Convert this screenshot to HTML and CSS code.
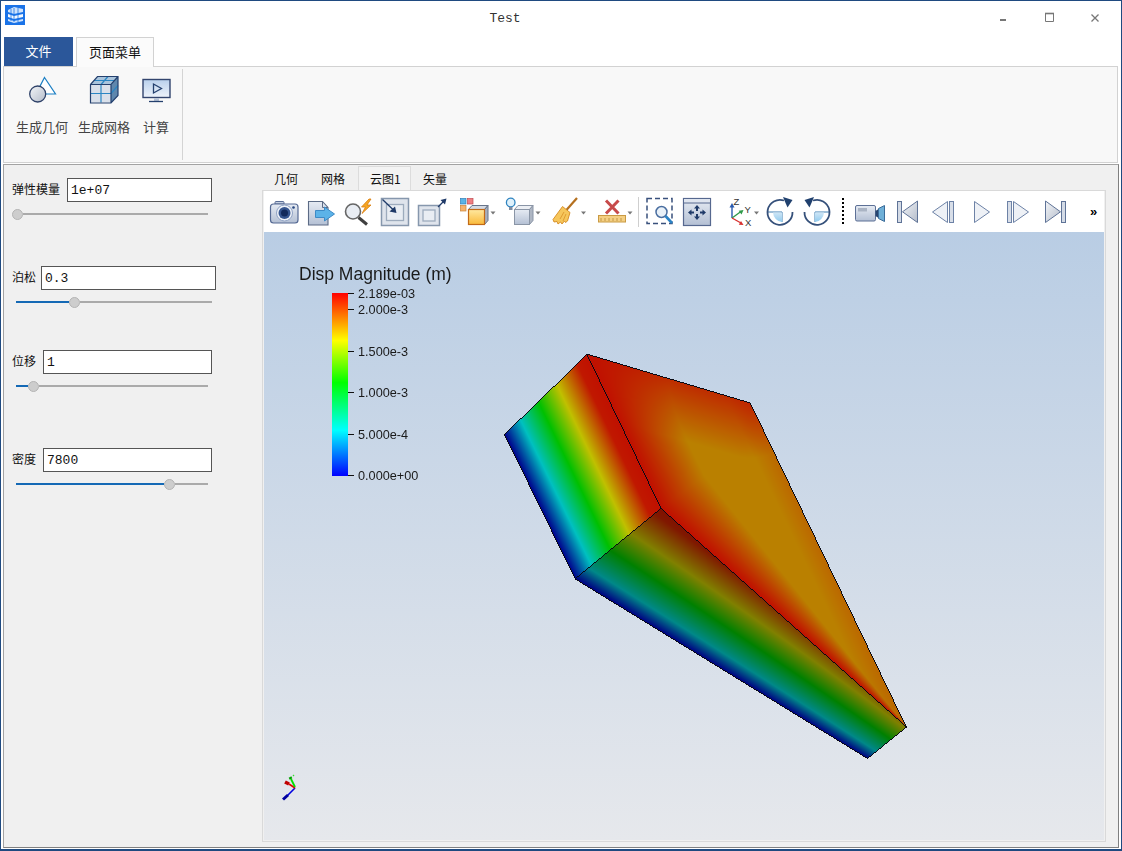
FILE: index.html
```html
<!DOCTYPE html>
<html lang="zh">
<head>
<meta charset="utf-8">
<title>Test</title>
<link rel="stylesheet" href="styles.css">
</head>
<body>
<svg class="defs" width="0" height="0" aria-hidden="true">
  <defs>
    <linearGradient id="metal" x1="0" y1="0" x2="0" y2="1"><stop offset="0" stop-color="#e6ebf3"/><stop offset="1" stop-color="#b4c0d4"/></linearGradient>
    <linearGradient id="grey" x1="0" y1="0" x2="1" y2="1"><stop offset="0" stop-color="#f3f5f8"/><stop offset="1" stop-color="#b4bcca"/></linearGradient>
    <linearGradient id="gold" x1="0" y1="0" x2="0" y2="1"><stop offset="0" stop-color="#ffe9a0"/><stop offset="1" stop-color="#f9b93a"/></linearGradient>
    <linearGradient id="sky" x1="0" y1="0" x2="0" y2="1"><stop offset="0" stop-color="#cfe6f6"/><stop offset="1" stop-color="#8fcaee"/></linearGradient>
    <linearGradient id="screen" x1="0" y1="0" x2="0" y2="1"><stop offset="0" stop-color="#b9d0ec"/><stop offset="1" stop-color="#eef3fa"/></linearGradient>
    <linearGradient id="bar" x1="0" y1="0" x2="0" y2="1">
      <stop offset="0" stop-color="#ff0000"/><stop offset="0.26" stop-color="#ffff00"/><stop offset="0.49" stop-color="#00ff00"/><stop offset="0.75" stop-color="#00ffff"/><stop offset="1" stop-color="#0000ff"/>
    </linearGradient>
  </defs>
</svg>

<div class="window">
  <header class="titlebar">
    <svg class="appicon" width="29" height="36" viewBox="1 1 29 36">
      <rect x="5" y="5" width="20" height="20" fill="#1a73e8"/>
      <path d="M8 10l6-3 9 2v3l-9 2-6-2z" fill="#cfe3fb"/>
      <path d="M8 14l6 2 9-2v3l-9 2-6-2z" fill="#f2f8ff"/>
      <path d="M8 19l6 2 9-2v2l-9 2-6-2z" fill="#cfe3fb"/>
      <path d="M11 9v12M14 8v14M18 8v14" stroke="#1a73e8" stroke-width=".8"/>
    </svg>
    <div class="title">Test</div>
    <div class="winbtns">
      <svg width="46" height="36" viewBox="980 1 46 36"><rect x="1000" y="19" width="6" height="2" fill="#777"/></svg>
      <svg width="46" height="36" viewBox="1026 1 46 36"><path d="M1045.5 13.5h8v8h-8z" fill="none" stroke="#777"/><path d="M1045 13.5h9" stroke="#777" stroke-width="1.6"/></svg>
      <svg width="46" height="36" viewBox="1072 1 46 36"><path d="M1091.5 14.5l7 7M1098.5 14.5l-7 7" stroke="#777" stroke-width="1.3" fill="none"/></svg>
    </div>
  </header>

  <nav class="menutabs">
    <div class="menutab menutab-file">文件</div>
    <div class="menutab menutab-page">页面菜单</div>
  </nav>

  <section class="ribbon">
    <div class="ribbon-group">
      <div class="rbtn rbtn-a">
        <svg width="36" height="36" viewBox="24 72 36 36">
          <path d="M44.500 77.500L55.500 94H36z" fill="#fff" stroke="#1b7fc4" stroke-width="1.200"/>
          <circle cx="37.700" cy="94" r="8" fill="url(#grey)" stroke="#2e4168" stroke-width="1.300"/>
        </svg>
        <span>生成几何</span>
      </div>
      <div class="rbtn rbtn-b">
        <svg width="36" height="36" viewBox="86 72 36 36">
          <rect x="90.500" y="84.500" width="20.500" height="18" fill="#d9e0ea"/>
          <path d="M97.500 76.500h20.500l-7 8h-20.500z" fill="#a9c4dc"/>
          <path d="M111 84.500l7-8v19l-7 7.500z" fill="#5f87ad"/>
          <path d="M90.500 93.500h20.500l7-8M101 84.500v18M101 84.500l7-8M94 80.500h20.500" fill="none" stroke="#2a86c4" stroke-width="1.200"/>
          <path d="M90.500 84.500l7-8h20.500v19l-7 7.500h-20.500zM90.500 84.500h20.500l7-8M111 84.500v18" fill="none" stroke="#24406e" stroke-width="1.200"/>
        </svg>
        <span>生成网格</span>
      </div>
      <div class="rbtn rbtn-c">
        <svg width="36" height="36" viewBox="138 72 36 36">
          <rect x="143" y="79.500" width="27" height="18" fill="url(#screen)" stroke="#33456e" stroke-width="1.400"/>
          <path d="M153.500 84v9l8-4.500z" fill="none" stroke="#24406e" stroke-width="1.300"/>
          <path d="M154 98h5v3h-5z" fill="#b8c4d6"/>
          <path d="M149 101.500h14" stroke="#24406e" stroke-width="1.300"/>
        </svg>
        <span>计算</span>
      </div>
    </div>
  </section>

  <main class="main">
    <aside class="params">
      <div class="field">
        <div class="row"><label class="lbl">弹性模量</label><input class="inp inp-e" value="1e+07" readonly></div>
        <div class="slider slider-first"><i class="thumb"></i><i class="rest"></i></div>
      </div>
      <div class="field field-2">
        <div class="row row-tight"><label class="lbl">泊松</label><input class="inp inp-n" value="0.3" readonly></div>
        <div class="slider slider-wide"><i class="fill" style="width:53px"></i><i class="thumb"></i><i class="rest"></i></div>
      </div>
      <div class="field field-3">
        <div class="row"><label class="lbl">位移</label><input class="inp inp-s" value="1" readonly></div>
        <div class="slider"><i class="fill" style="width:12px"></i><i class="thumb"></i><i class="rest"></i></div>
      </div>
      <div class="field field-4">
        <div class="row"><label class="lbl">密度</label><input class="inp inp-s" value="7800" readonly></div>
        <div class="slider"><i class="fill" style="width:148px"></i><i class="thumb"></i><i class="rest"></i></div>
      </div>
    </aside>

    <section class="work">
      <div class="viewtabs">
        <div class="vtab">几何</div>
        <div class="vtab">网格</div>
        <div class="vtab vtab-on">云图1</div>
        <div class="vtab">矢量</div>
      </div>
      <div class="pane">
        <div class="toolbar">
          <svg width="37" height="41" viewBox="266 191 37 41">
            <path d="M275 204v-1.500q0-1 1-1h7q1 0 1 1v1.500z" fill="#c5d0e2" stroke="#5a6d95"/>
            <rect x="270.500" y="204" width="27.500" height="19" rx="3" fill="url(#metal)" stroke="#566a94" stroke-width="1.200"/>
            <circle cx="284.500" cy="213" r="8" fill="#eef2f8" stroke="#8fa2c4"/>
            <circle cx="284.500" cy="213" r="6" fill="#35558f"/>
            <circle cx="284.500" cy="213" r="3.500" fill="#122a5c"/>
            <circle cx="293.500" cy="207.500" r="1.300" fill="#24457f"/>
          </svg>
          <svg width="37" height="41" viewBox="303 191 37 41">
            <path d="M308.500 201.500h14l5.500 6v17.500h-19.500z" fill="url(#metal)" stroke="#5c6b85" stroke-width="1.100"/>
            <path d="M322.500 201.500v6h5.500" fill="none" stroke="#5c6b85"/>
            <path d="M315.500 210.500h9v-3.500l10 7-10 7v-3.500h-9z" fill="#5cb3e8" stroke="#3d8ac6"/>
          </svg>
          <svg width="37" height="41" viewBox="340 191 37 41">
            <circle cx="353" cy="211.500" r="7.500" fill="#e9edf3" stroke="#666" stroke-width="1.600"/>
            <path d="M358.500 217.500l8.500 7" stroke="#3f3f3f" stroke-width="3"/>
            <path d="M369 199l-7.500 8h4l-3.500 6.500 9-8.500h-4l4-6z" fill="#f5a623" stroke="#d97d10" stroke-width=".8"/>
          </svg>
          <svg width="37" height="41" viewBox="377 191 37 41">
            <rect x="381.500" y="198.500" width="27" height="27" fill="#dfe4ec" stroke="#8697ad" stroke-width="1.500"/>
            <rect x="386.500" y="204.500" width="17" height="16" fill="#e9edf3" stroke="#9dabbd" stroke-width="1.300"/>
            <path d="M382.500 199.500l11.500 11" stroke="#1f3a68" stroke-width="1.300"/>
            <path d="M396.500 213l-7-1.500 5.500-5z" fill="#1f3a68"/>
          </svg>
          <svg width="37" height="41" viewBox="414 191 37 41">
            <rect x="418.500" y="205.500" width="21" height="20" fill="#dfe4ec" stroke="#8697ad" stroke-width="1.500"/>
            <rect x="423" y="210" width="12" height="11" fill="#e9edf3" stroke="#9dabbd" stroke-width="1.300"/>
            <path d="M438 207l6-6" stroke="#1f3a68" stroke-width="1.300"/>
            <path d="M446.500 198.500l-1.500 6-4.500-4.500z" fill="#1f3a68"/>
          </svg>
          <svg width="52" height="41" viewBox="451 191 52 41">
            <rect x="460.500" y="198.500" width="5.500" height="5.500" fill="#5ab4e6" stroke="#2f7fb8" stroke-width=".7"/>
            <rect x="467.500" y="198.500" width="5.500" height="5.500" fill="#ee7f83" stroke="#c24b50" stroke-width=".7"/>
            <rect x="460.500" y="205.500" width="5.500" height="5.500" fill="#f6b26b" stroke="#c9843a" stroke-width=".7"/>
            <path d="M468.500 209.500l3.500-4h16l-3.500 4z" fill="#d5dae3" stroke="#67748a"/>
            <path d="M484.500 209.500l3.500-4v15l-3.500 4z" fill="#a7afbd" stroke="#67748a"/>
            <rect x="468.500" y="209.500" width="16" height="15" fill="url(#gold)" stroke="#c26a17" stroke-width="1.200"/>
            <path d="M490.500 211.500h5l-2.500 3z" fill="#777"/>
          </svg>
          <svg width="45" height="41" viewBox="503 191 45 41">
            <circle cx="510.700" cy="202.500" r="4.300" fill="#dff1fb" stroke="#2f84c0" stroke-width="1.300"/>
            <path d="M509 207h3.500v3h-3.500z" fill="#7f8ca0"/>
            <path d="M514.500 209.500l3.500-4h15l-3.500 4z" fill="#eceff4" stroke="#8a95a6"/>
            <path d="M529.500 209.500l3.500-4v15l-3.500 4z" fill="#aeb6c3" stroke="#8a95a6"/>
            <rect x="514.500" y="209.500" width="15" height="15" fill="url(#metal)" stroke="#8a95a6"/>
            <path d="M535.500 211.500h5l-2.500 3z" fill="#777"/>
          </svg>
          <svg width="46" height="41" viewBox="548 191 46 41">
            <path d="M577 198l-11 12.500" stroke="#b5701f" stroke-width="2.200"/>
            <path d="M562.500 206.500l7.500 6-2.500 8.500-2 1.500-1-1.500-2.500 3-1.500-2-2.500 2-1-2.500-3 .5-1-2.500z" fill="#f6c65b" stroke="#d58a20" stroke-width=".9"/>
            <path d="M564 212l-4 7M566 214l-3 7" stroke="#d58a20" stroke-width=".7"/>
            <path d="M581 211.500h5l-2.500 3z" fill="#777"/>
          </svg>
          <svg width="42" height="41" viewBox="594 191 42 41">
            <rect x="598.500" y="215.500" width="27" height="6.500" fill="#f4cf83" stroke="#c99a43"/>
            <path d="M601 218v3M605 218v3M609 218v3M613 218v3M617 218v3M621 218v3" stroke="#b88a3a" stroke-width=".8"/>
            <path d="M606 200.500l12.500 13M618.500 200.500l-12.500 13" stroke="#c74a4a" stroke-width="3"/>
            <path d="M627.500 211.500h5l-2.500 3z" fill="#777"/>
          </svg>
          <svg width="5" height="41" viewBox="636 191 5 41"><path d="M638.500 197v30" stroke="#cfcfcf"/></svg>
          <svg width="37" height="41" viewBox="641 191 37 41">
            <rect x="647" y="198.500" width="25" height="25" fill="none" stroke="#39507c" stroke-width="1.500" stroke-dasharray="5 3"/>
            <circle cx="661.500" cy="212" r="5.500" fill="#e9f1f8" stroke="#4a6ea0" stroke-width="1.500"/>
            <path d="M665.500 216l6.500 7" stroke="#2b83c6" stroke-width="2.600"/>
          </svg>
          <svg width="37" height="41" viewBox="678 191 37 41">
            <rect x="683.500" y="198.500" width="27" height="27" fill="url(#metal)" stroke="#56688f" stroke-width="1.200"/>
            <rect x="684" y="199" width="26" height="3.500" fill="#dfe5ef"/>
            <path d="M684 203h26" stroke="#56688f"/>
            <path d="M697 205l3 3.500h-2v2.500h-2v-2.500h-2zM697 220l3-3.500h-2v-2.500h-2v2.500h-2zM688 212.500l3.500-3v2h2.500v2h-2.500v2zM706 212.500l-3.500-3v2h-2.500v2h2.500v2z" fill="#1f3a68"/>
          </svg>
          <svg width="47" height="41" viewBox="715 191 47 41">
            <path d="M732 218v-12" stroke="#2a5bb0" stroke-width="1.400"/><path d="M732 203l2.500 4.500h-5z" fill="#2a5bb0"/>
            <path d="M732 218l9-6.500" stroke="#2f9a4a" stroke-width="1.400"/><path d="M743.500 210l-2 4.500-2.800-3.800z" fill="#2f9a4a"/>
            <path d="M732 218l9 5" stroke="#d9312f" stroke-width="1.400"/><path d="M743.500 225l-4.700-.2 2.200-3.800z" fill="#d9312f"/>
            <text class="axt" x="733.500" y="205">Z</text>
            <text class="axt" x="744.500" y="213">Y</text>
            <text class="axt" x="745" y="226">X</text>
            <path d="M754 211.500h5l-2.500 3z" fill="#777"/>
          </svg>
          <svg width="37" height="41" viewBox="762 191 37 41">
            <path d="M767.500 212H782v10" fill="none" stroke="#3f7fb2"/>
            <path d="M782 212.500h-9a10 10 0 0 0 9 9.500z" fill="url(#sky)"/>
            <path d="M784 200.500A12.500 12.500 0 1 0 792.500 212" fill="none" stroke="#35507a" stroke-width="1.800"/>
            <path d="M783 197l9.500 3-5 7.500z" fill="#20406e"/>
          </svg>
          <svg width="37" height="41" viewBox="799 191 37 41">
            <path d="M829.500 212H815v10" fill="none" stroke="#3f7fb2"/>
            <path d="M815 212.500h9a10 10 0 0 1-9 9.500z" fill="url(#sky)"/>
            <path d="M813 200.500A12.500 12.500 0 1 1 804.500 212" fill="none" stroke="#35507a" stroke-width="1.800"/>
            <path d="M814 197l-9.500 3 5 7.500z" fill="#20406e"/>
          </svg>
          <svg width="14" height="41" viewBox="836 191 14 41"><path d="M843 198v28" stroke="#000" stroke-width="2" stroke-dasharray="2 2"/></svg>
          <svg width="39" height="41" viewBox="850 191 39 41">
            <rect x="855.500" y="205.500" width="20" height="15.500" rx="1.500" fill="url(#metal)" stroke="#5d7096"/>
            <rect x="858" y="208" width="9" height="3.500" fill="#aab4c4"/>
            <path d="M875.500 211l3-2v9l-3-2z" fill="#27456f"/>
            <path d="M878.500 208.500l6-3v16l-6-3z" fill="#6fb0d8" stroke="#3b6b99"/>
          </svg>
          <svg width="36" height="41" viewBox="889 191 36 41">
            <rect x="897.500" y="201.500" width="4" height="21" fill="#d4dbe6" stroke="#5f7397"/>
            <path d="M917.500 201v21.500l-15-10.700z" fill="url(#grey)" stroke="#5f7397"/>
          </svg>
          <svg width="37" height="41" viewBox="925 191 37 41">
            <path d="M947.500 201.500v21l-15-10.500z" fill="#eef1f6" stroke="#6d82a6"/>
            <rect x="949.500" y="201.500" width="4" height="21" fill="#d8dee8" stroke="#6d82a6"/>
          </svg>
          <svg width="38" height="41" viewBox="962 191 38 41">
            <path d="M974.500 201.500v21l15-10.500z" fill="#eef1f6" stroke="#6d82a6"/>
          </svg>
          <svg width="37" height="41" viewBox="1000 191 37 41">
            <rect x="1007.500" y="201.500" width="4" height="21" fill="#d8dee8" stroke="#6d82a6"/>
            <path d="M1013.500 201.500v21l15-10.500z" fill="#eef1f6" stroke="#6d82a6"/>
          </svg>
          <svg width="37" height="41" viewBox="1037 191 37 41">
            <path d="M1045.500 201v21.500l15-10.700z" fill="url(#grey)" stroke="#5f7397"/>
            <rect x="1061.500" y="201.500" width="4" height="21" fill="#d4dbe6" stroke="#5f7397"/>
          </svg>
          <span class="more">»</span>
        </div>
        <div class="viewport">
          <canvas id="scene" class="layer" width="840" height="608"></canvas>
          <svg class="layer" width="840" height="608" viewBox="264 232 840 608">
            <text class="lg-title" x="299" y="280">Disp Magnitude (m)</text>
            <rect x="332" y="293" width="16" height="183" fill="url(#bar)"/>
            <path d="M348 293.500h6M348 309.500h6M348 351.500h6M348 392.500h6M348 434.500h6M348 475.500h6" stroke="#111"/>
            <text class="lg" x="358" y="297.500">2.189e-03</text>
            <text class="lg" x="358" y="313.500">2.000e-3</text>
            <text class="lg" x="358" y="355.500">1.500e-3</text>
            <text class="lg" x="358" y="396.500">1.000e-3</text>
            <text class="lg" x="358" y="438.500">5.000e-4</text>
            <text class="lg" x="358" y="479.500">0.000e+00</text>
            <path d="M295 788l-11 11" stroke="#0000e0" stroke-width="1.600"/>
            <path d="M288 795l-5 4.500" stroke="#0000a0" stroke-width="3"/>
            <path d="M295 788l-6-4" stroke="#e00000" stroke-width="1.600"/>
            <path d="M289 784l-4-2" stroke="#c00000" stroke-width="3.500"/>
            <path d="M295 787l-4-8" stroke="#00e000" stroke-width="1.800"/>
            <path d="M291 779l-1-2" stroke="#00a000" stroke-width="3"/>
            <path d="M293 776l1-1" stroke="#30e030" stroke-width="1.300"/>
          </svg>
        </div>
      </div>
    </section>
  </main>
</div>
<script src="scene.js"></script>
</body>
</html>
```

FILE: styles.css
```css
* { box-sizing: border-box; }
html, body { margin: 0; padding: 0; }
body {
  width: 1122px;
  height: 851px;
  overflow: hidden;
  background: #fff;
  font-family: "Noto Sans CJK SC", "Liberation Sans", sans-serif;
  font-size: 12px;
  color: #111;
}
.defs { position: absolute; }
svg { display: block; flex: none; }

.window {
  width: 1122px;
  height: 851px;
  background: #fff;
  border: 1px solid #1f4a80;
  border-bottom-width: 2px;
  display: flex;
  flex-direction: column;
}

.titlebar { height: 36px; display: flex; flex: none; }
.title {
  flex: 1;
  text-align: center;
  font: 13px/36px "Liberation Mono", monospace;
  color: #333;
}
.winbtns { display: flex; margin-right: 3px; }

.menutabs { height: 29px; flex: none; display: flex; padding-left: 3px; gap: 3px; }
.menutab { font-size: 13px; line-height: 28px; text-align: center; }
.menutab-file { width: 69px; background: #2b579a; color: #fff; }
.menutab-page {
  width: 78px;
  height: 30px;
  border: 1px solid #d2d2d2;
  border-bottom: 0;
  position: relative;
  z-index: 1;
  background: #fbfbfb;
  color: #111;
}

.ribbon {
  height: 97px;
  flex: none;
  margin: 0 3px 0 2px;
  background: #f8f8f8;
  border: 1px solid #d2d2d2;
  display: flex;
}
.ribbon-group {
  width: 179px;
  margin: 2px 0;
  border-right: 1px solid #d4d4d4;
  display: flex;
}
.rbtn { display: flex; flex-direction: column; align-items: center; padding-top: 3px; color: #444; }
.rbtn span { font-size: 13px; line-height: 20px; margin-top: 9px; white-space: nowrap; }
.rbtn-a { width: 52px; margin-left: 12px; }
.rbtn-b { width: 52px; margin-left: 10px; }
.rbtn-c { width: 26px; margin-left: 13px; }

.main {
  height: 684px;
  flex: none;
  margin: 1px 2px 0 2px;
  background: #f0f0f0;
  border: 1px solid #a3a3a3;
  border-right-color: #808080;
  border-bottom-color: #808080;
  display: flex;
}

.params { width: 258px; flex: none; padding: 13px 0 0 8px; }
.field-2 { margin-top: 46px; }
.field-3 { margin-top: 42px; }
.field-4 { margin-top: 56px; }
.row { display: flex; align-items: center; gap: 7px; height: 24px; }
.row-tight { gap: 5px; }
.lbl { font-size: 12px; line-height: 18px; padding-bottom: 2px; white-space: nowrap; color: #111; }
.inp {
  height: 24px;
  padding: 0 3px;
  margin: 0;
  border: 1px solid #555;
  border-radius: 0;
  background: #fff;
  font: 13px "Liberation Mono", monospace;
  color: #111;
  outline: 0;
}
.inp-e { width: 145px; }
.inp-n { width: 175px; }
.inp-s { width: 169px; }

.slider { display: flex; align-items: center; height: 12px; width: 192px; margin: 6px 0 0 4px; }
.slider-first { width: 196px; margin-left: 0; }
.slider-wide { width: 196px; }
.fill { display: block; height: 2px; background: #1469b5; flex: none; }
.rest { display: block; height: 2px; background: #aaa; flex: 1; }
.thumb {
  display: block;
  width: 11px;
  height: 11px;
  flex: none;
  border-radius: 50%;
  background: #cdcdcd;
  border: 1px solid #b4b4b4;
}

.work { width: 844px; flex: none; margin-top: 1px; }
.viewtabs { height: 24px; display: flex; }
.vtab {
  width: 47px;
  padding-left: 12px;
  line-height: 25px;
  font-size: 12px;
  color: #111;
  white-space: nowrap;
}
.vtab:nth-child(2) { width: 49px; }
.vtab-on {
  width: 53px;
  padding-left: 11px;
  background: #f3f3f3;
  border: 1px solid #dcdcdc;
  border-bottom: 0;
  line-height: 24px;
}

.pane {
  width: 844px;
  height: 652px;
  border: 1px solid #d9d9d9;
  padding: 0 1px 1px;
}
.toolbar {
  height: 41px;
  background: #fff;
  display: flex;
  padding-left: 2px;
}
.more {
  font: bold 13px/41px "Liberation Sans", sans-serif;
  margin-left: 16px;
  color: #000;
}
.viewport {
  height: 608px;
  position: relative;
  background: linear-gradient(#b9cde4, #e6e8ec);
}
.layer { position: absolute; left: 0; top: 0; }

.axt { font: 9.500px "Liberation Sans", sans-serif; fill: #333; }
.lg-title { font: 17.500px "Liberation Sans", sans-serif; fill: #1a1a1a; }
.lg { font: 12.700px "Liberation Sans", sans-serif; fill: #1a1a1a; }
```

FILE: scene.js
```js
(function () {
  var canvas = document.getElementById('scene');
  var ctx = canvas.getContext('2d');
  var W = canvas.width, H = canvas.height, OX = 264, OY = 232;
  var img = ctx.createImageData(W, H), data = img.data;

  var A = [504.5, 434.5], B = [587, 354], C = [750.5, 403], D = [906.5, 727],
      E = [867.5, 758.5], F = [575, 578.5], G = [661, 508];

  function lineDist(p, a, b) {
    var dx = b[0] - a[0], dy = b[1] - a[1];
    return Math.abs((p[0] - a[0]) * dy - (p[1] - a[1]) * dx) / Math.hypot(dx, dy);
  }
  function segDist(p, a, b) {
    var dx = b[0] - a[0], dy = b[1] - a[1];
    var t = ((p[0] - a[0]) * dx + (p[1] - a[1]) * dy) / (dx * dx + dy * dy);
    t = Math.max(0, Math.min(1, t));
    return Math.hypot(p[0] - a[0] - t * dx, p[1] - a[1] - t * dy);
  }
  function inside(p, poly) {
    var c = false;
    for (var i = 0, j = poly.length - 1; i < poly.length; j = i++) {
      var a = poly[i], b = poly[j];
      if ((a[1] > p[1]) !== (b[1] > p[1]) &&
          p[0] < (b[0] - a[0]) * (p[1] - a[1]) / (b[1] - a[1]) + a[0]) c = !c;
    }
    return c;
  }
  function ramp(stops, s) {
    for (var i = 1; i < stops.length; i++) {
      if (s <= stops[i][0]) {
        var a = stops[i - 1], b = stops[i], t = (s - a[0]) / (b[0] - a[0]);
        return [a[1][0] + (b[1][0] - a[1][0]) * t, a[1][1] + (b[1][1] - a[1][1]) * t, a[1][2] + (b[1][2] - a[1][2]) * t];
      }
    }
    return stops[stops.length - 1][1];
  }
  var LEFT = [
    [0, [0, 0, 140]], [0.19, [0, 192, 192]], [0.41, [0, 192, 0]],
    [0.63, [192, 192, 0]], [0.88, [192, 24, 0]], [1, [192, 16, 0]]
  ];
  var BOTTOM = [
    [0, [0, 0, 130]], [0.15, [0, 136, 136]], [0.4, [0, 128, 0]],
    [0.64, [128, 128, 0]], [0.92, [128, 24, 0]], [1, [128, 16, 0]]
  ];
  function put(x, y, c) {
    var i = (y * W + x) * 4;
    data[i] = c[0]; data[i + 1] = c[1]; data[i + 2] = c[2]; data[i + 3] = 255;
  }

  var left = [A, B, G, F], bottom = [F, G, D, E], top = [B, C, D, G];
  for (var y = 0; y < H; y++) {
    for (var x = 0; x < W; x++) {
      var p = [x + OX + 0.5, y + OY + 0.5], d0, d1;
      if (inside(p, left)) {
        d0 = lineDist(p, A, F); d1 = lineDist(p, B, G);
        put(x, y, ramp(LEFT, d0 / (d0 + d1)));
      } else if (inside(p, bottom)) {
        d0 = lineDist(p, F, E); d1 = lineDist(p, G, D);
        put(x, y, ramp(BOTTOM, 0.4 * d0 / (d0 + d1) + 0.6 * d0 / 105));
      } else if (inside(p, top)) {
        var dE = Math.min(segDist(p, B, G), segDist(p, G, D));
        var dT = segDist(p, B, C), dC = segDist(p, C, D);
        var u = dE / (dE + dC + 0.001);
        var t = Math.pow(Math.min(u / 0.42, 1), 1.1);
        t *= 0.25 + 0.75 * Math.min(dT / 55, 1);
        t *= 0.78 + 0.22 * Math.min(dC / 20, 1);
        put(x, y, [192 - 6 * t, 16 + 112 * t, 0]);
      }
    }
  }
  function edge(a, b) {
    var n = Math.ceil(Math.max(Math.abs(b[0] - a[0]), Math.abs(b[1] - a[1])));
    for (var i = 0; i <= n; i++) {
      var x = Math.floor(a[0] + (b[0] - a[0]) * i / n - OX);
      var y = Math.floor(a[1] + (b[1] - a[1]) * i / n - OY);
      put(x, y, [10, 10, 20]);
    }
  }
  [[A, B], [B, C], [C, D], [D, E], [E, F], [F, A], [B, G], [G, D], [F, G]].forEach(function (e) { edge(e[0], e[1]); });
  ctx.putImageData(img, 0, 0);
})();
```
